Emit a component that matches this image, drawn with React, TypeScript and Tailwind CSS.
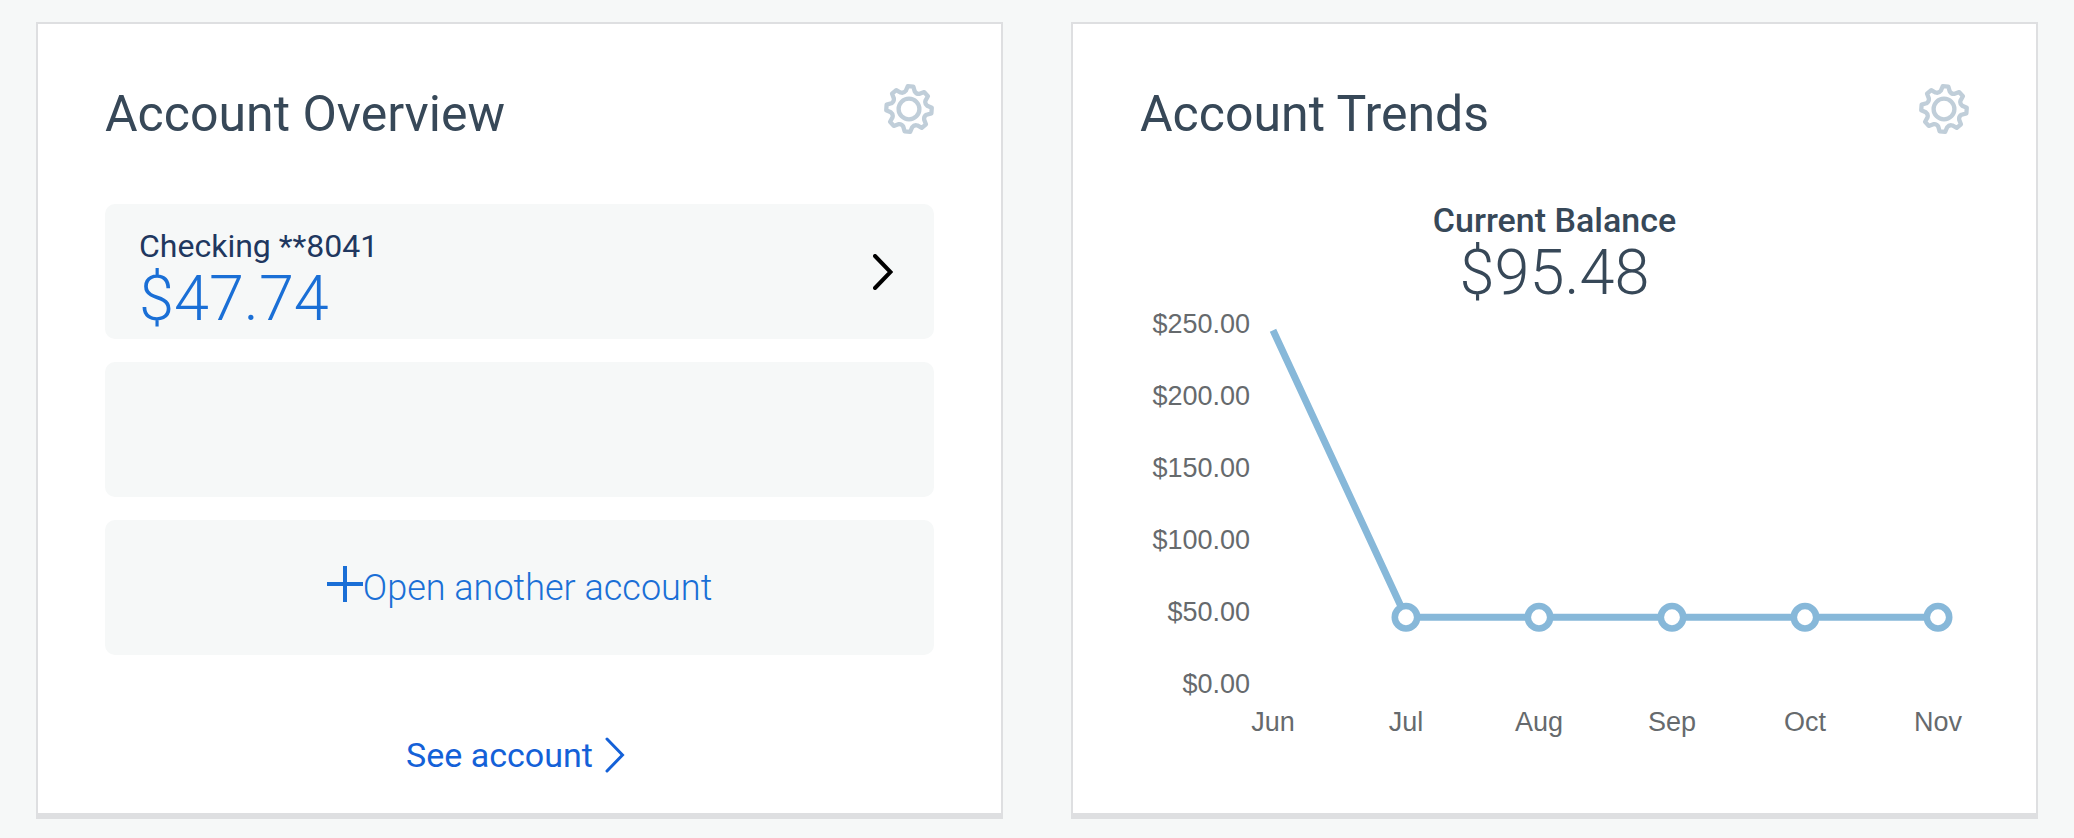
import React from 'react';

// ── Data ─────────────────────────────────────────────────────────────────────

const MONTHS = ['Jun', 'Jul', 'Aug', 'Sep', 'Oct', 'Nov'];
const BALANCES = [247, 47.74, 47.74, 47.74, 47.74, 47.74];
const TICKS = [250, 200, 150, 100, 50, 0];

// ── Icons ────────────────────────────────────────────────────────────────────

function gearPath(teeth: number, tilt: number): string {
  const step = 360 / teeth;
  const at = (r: number, deg: number) => {
    const a = (deg * Math.PI) / 180;
    return `${(25 + r * Math.sin(a)).toFixed(2)} ${(25 - r * Math.cos(a)).toFixed(2)}`;
  };
  let d = '';
  for (let i = 0; i < teeth; i++) {
    const a = tilt + i * step;
    d += `${i === 0 ? 'M' : 'L'}${at(22.8, a - 7)} L${at(22.8, a + 7)} L${at(18.5, a + 14)} `;
    d += `Q${at(16.4, a + step / 2)} ${at(18.5, a + step - 14)} `;
  }
  return `${d}Z`;
}

const GearIcon = () => (
  <svg
    viewBox="0 0 50 50"
    className="size-[50px]"
    fill="none"
    stroke="currentColor"
    strokeWidth="4.3"
    strokeLinejoin="round"
    aria-hidden="true"
  >
    <path d={gearPath(8, 4)} />
    <circle cx="25" cy="25" r="10.4" />
  </svg>
);

const ChevronIcon = ({ strokeWidth = 3 }: { strokeWidth?: number }) => (
  <svg
    viewBox="0 0 20 36"
    className="h-9 w-5 flex-shrink-0"
    fill="none"
    stroke="currentColor"
    strokeWidth={strokeWidth}
    strokeLinecap="round"
    aria-hidden="true"
  >
    <path d="M2 2 L17.5 18 L2 34" />
  </svg>
);

const PlusIcon = () => (
  <svg
    viewBox="0 0 36 36"
    className="mb-2 size-9 flex-shrink-0"
    stroke="currentColor"
    strokeWidth="4"
    aria-hidden="true"
  >
    <path d="M18 0V36M0 18H36" />
  </svg>
);

// ── Card ─────────────────────────────────────────────────────────────────────

interface CardProps {
  title: string;
  children: React.ReactNode;
}

const Card: React.FC<CardProps> = ({ title, children }) => (
  <section className="flex flex-col border-2 border-b-6 border-[#dedfe1] bg-white px-[67px] pt-[60px] pb-9">
    <header className="flex items-start justify-between">
      <h2 className="text-[50px] leading-[60px] text-[#374858]">{title}</h2>
      <button className="text-[#c0ced9]" aria-label={`${title} settings`}>
        <GearIcon />
      </button>
    </header>
    {children}
  </section>
);

// ── Trend chart ──────────────────────────────────────────────────────────────

const TrendChart = () => {
  const points = BALANCES.map((value, i) => ({
    x: 133 + i * 133,
    y: 379 - value * 1.44,
  }));

  return (
    <svg
      viewBox="0 0 829 440"
      className="w-full font-['Liberation_Sans',Arial,sans-serif] text-[27px]"
      role="img"
      aria-label="Account balance by month"
    >
      <g fill="#666a6d" textAnchor="end">
        {TICKS.map((tick, i) => (
          <text key={tick} x="110" y={26 + i * 72}>
            {`$${tick.toFixed(2)}`}
          </text>
        ))}
      </g>
      <g fill="#666a6d" textAnchor="middle">
        {MONTHS.map((month, i) => (
          <text key={month} x={points[i].x} y="424">
            {month}
          </text>
        ))}
      </g>
      <polyline
        points={points.map((p) => `${p.x},${p.y}`).join(' ')}
        fill="none"
        stroke="#87b8d9"
        strokeWidth="7"
      />
      {points.slice(1).map((p) => (
        <circle key={p.x} cx={p.x} cy={p.y} r="11.2" fill="#fff" stroke="#87b8d9" strokeWidth="6.6" />
      ))}
    </svg>
  );
};

// ── Page ─────────────────────────────────────────────────────────────────────

export default function App() {
  return (
    <main className="grid min-h-screen grid-cols-1 items-start gap-x-[68px] gap-y-9 bg-[#f6f8f8] px-9 pt-[22px] font-[Roboto,sans-serif] lg:grid-cols-2 lg:items-stretch lg:pb-[19px]">
      <Card title="Account Overview">
        <div className="mt-[60px] flex flex-col gap-[23px]">
          <a
            href="#checking"
            className="flex min-h-[135px] items-center justify-between rounded-[10px] bg-[#f6f8f8] pr-[41px] pl-[34px]"
          >
            <span className="flex flex-col pt-4">
              <span className="text-[32px] leading-[38px] text-[#20375f]">Checking **8041</span>
              <span className="text-[63px] leading-[68px] font-light text-[#1a6fd6]">$47.74</span>
            </span>
            <span className="text-black">
              <ChevronIcon strokeWidth={4} />
            </span>
          </a>
          <div className="min-h-[135px] rounded-[10px] bg-[#f6f8f8]" />
          <button className="flex min-h-[135px] items-center justify-center rounded-[10px] bg-[#f6f8f8] text-[36px] font-light text-[#1a6fd6]">
            <PlusIcon />
            Open another account
          </button>
        </div>
        <a
          href="#account"
          className="mt-20 flex items-center justify-center gap-3 pr-2 text-[34px] leading-[40px] text-[#1461d8]"
        >
          See account
          <ChevronIcon />
        </a>
      </Card>

      <Card title="Account Trends">
        <div className="mt-[57px] text-center text-[#374858]">
          <p className="text-[34px] leading-[38px] font-medium">Current Balance</p>
          <p className="text-[63px] leading-[68px] font-light">$95.48</p>
        </div>
        <TrendChart />
      </Card>
    </main>
  );
}
